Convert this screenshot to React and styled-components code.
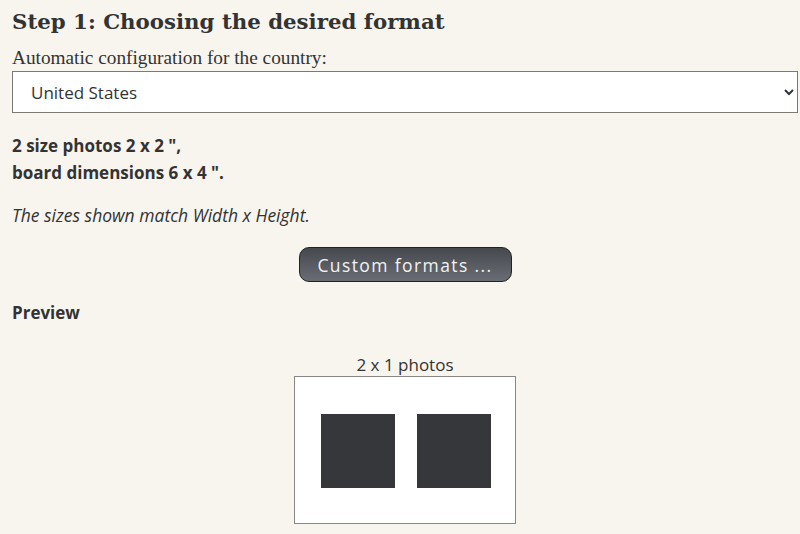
import styled, { createGlobalStyle } from 'styled-components';

const GlobalStyle = createGlobalStyle`
  body {
    margin: 0;
    background: #f8f5ee;
    color: #333;
    font-family: "Open Sans", "Noto Sans", sans-serif;
  }
`;

const Page = styled.div`
  padding: 0 2px 0 12px;
`;

const Title = styled.h2`
  font-family: "DejaVu Serif", Georgia, serif;
  font-weight: bold;
  font-size: 21.3px;
  margin: 0;
  padding-top: 7px;
  line-height: 30px;
  color: #333;
`;

const Label = styled.div`
  font-family: "Liberation Serif", Georgia, serif;
  font-size: 19.3px;
  margin-top: 9px;
  line-height: 23px;
`;

const Select = styled.select`
  display: block;
  width: 100%;
  height: 42px;
  margin-top: 2px;
  padding: 0 0 0 14px;
  font-family: "Open Sans", sans-serif;
  font-size: 17px;
  color: #333;
  background: #fff;
  border: 1px solid #7d7a76;
  border-radius: 0;
`;

const Summary = styled.p`
  font-weight: bold;
  font-size: 17px;
  line-height: 27px;
  margin: 19px 0 0;
`;

const Note = styled.p`
  font-style: italic;
  font-size: 17.5px;
  margin: 17px 0 0;
`;

const ButtonRow = styled.div`
  display: flex;
  justify-content: center;
  margin-top: 20px;
`;

const Button = styled.button`
  width: 213px;
  height: 35px;
  border: 1px solid #222;
  border-radius: 10px;
  background: linear-gradient(#45484d, #6a6d74);
  color: #f2f2f2;
  font-family: "Open Sans", sans-serif;
  font-size: 17.5px;
  letter-spacing: 1.4px;
  cursor: pointer;
`;

const SubTitle = styled.div`
  font-weight: bold;
  font-size: 17px;
  margin-top: 19px;
`;

const Preview = styled.div`
  display: flex;
  flex-direction: column;
  align-items: center;
  margin-top: 31px;
`;

const Caption = styled.div`
  font-size: 17px;
  line-height: 20px;
`;

const Board = styled.div`
  background: #fff;
  border: 1px solid #8a8784;
  display: flex;
  gap: 22px;
  margin-top: 1px;
  padding: 37px 0 0 26px;
  box-sizing: content-box;
  width: 194px;
  height: 109px;
`;

const Photo = styled.div`
  width: 74px;
  height: 74px;
  background: #35373b;
`;

export default function App() {
  return (
    <Page>
      <GlobalStyle />
      <Title>Step 1: Choosing the desired format</Title>
      <Label>Automatic configuration for the country:</Label>
      <Select defaultValue="us">
        <option value="us">United States</option>
      </Select>
      <Summary>
        2 size photos 2 x 2 ",
        <br />
        board dimensions 6 x 4 ".
      </Summary>
      <Note>The sizes shown match Width x Height.</Note>
      <ButtonRow>
        <Button>Custom formats ...</Button>
      </ButtonRow>
      <SubTitle>Preview</SubTitle>
      <Preview>
        <Caption>2 x 1 photos</Caption>
        <Board>
          <Photo />
          <Photo />
        </Board>
      </Preview>
    </Page>
  );
}
